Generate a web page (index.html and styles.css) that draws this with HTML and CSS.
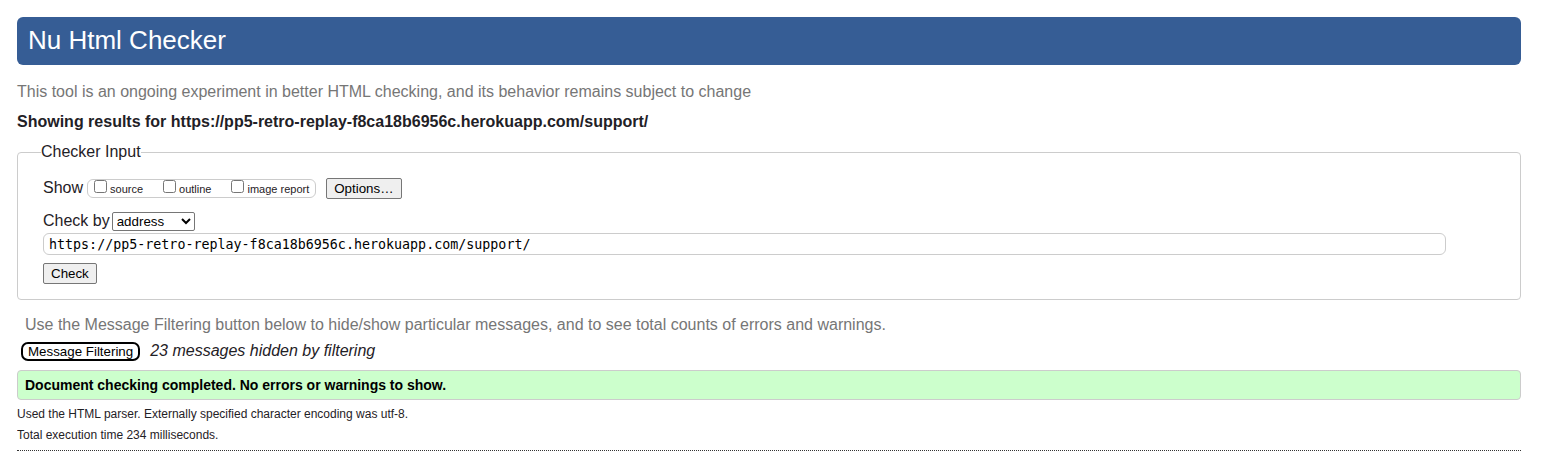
FILE: index.html
```
<!DOCTYPE html>
<html lang="en">
<head>
<meta charset="utf-8">
<title>Nu Html Checker</title>
<link rel="stylesheet" href="styles.css">
</head>
<body>
<h1 class="banner">Nu Html Checker</h1>
<p class="note">This tool is an ongoing experiment in better HTML checking, and its behavior remains subject to change</p>
<h2 class="results-title">Showing results for https://pp5-retro-replay-f8ca18b6956c.herokuapp.com/support/</h2>
<form>
  <fieldset class="checker">
    <legend>Checker Input</legend>
    <div class="show-row">
      <span>Show</span>
      <div class="checks">
        <label><input type="checkbox">source</label>
        <label><input type="checkbox">outline</label>
        <label><input type="checkbox">image report</label>
      </div>
      <button type="button" class="btn options">Options…</button>
    </div>
    <div class="by-row">
      <label for="by">Check by</label>
      <select id="by"><option>address</option><option>file upload</option><option>text input</option></select>
    </div>
    <input class="address" type="url" aria-label="Address" value="https://pp5-retro-replay-f8ca18b6956c.herokuapp.com/support/">
    <button type="button" class="btn">Check</button>
  </fieldset>
</form>
<p class="hint">Use the Message Filtering button below to hide/show particular messages, and to see total counts of errors and warnings.</p>
<div class="filter-row">
  <button type="button" class="filter">Message Filtering</button>
  <em>23 messages hidden by filtering</em>
</div>
<p class="success">Document checking completed. No errors or warnings to show.</p>
<p class="details">Used the HTML parser. Externally specified character encoding was utf-8.</p>
<p class="details">Total execution time 234 milliseconds.</p>
<hr class="rule">
</body>
</html>
```
FILE: styles.css
```
* { box-sizing: border-box; }
body { margin: 17px 22px 0 17px; font: 16px/20px "Liberation Sans", Arial, sans-serif; color: #1f2126; background: #fff; }
h1, h2, p { margin: 0; }
.banner { padding: 7px 11px 9px; border-radius: 6px; background: #365d95; color: #fff; font-size: 26px; font-weight: 400; line-height: 32px; }
.note { margin-top: 17px; color: #767676; }
.results-title { margin-top: 10px; font-size: 16px; line-height: 20px; }
.checker { display: block; min-width: 0; margin: 10px 0 0; padding: 15px 25px; border: 1px solid #ccc; border-radius: 4px; }
.checker legend { margin-left: -2px; padding: 0; }
.show-row, .by-row, .checks, .filter-row { display: flex; align-items: center; }
.show-row { height: 22px; }
.checks { margin-left: 4px; padding: 0 6px; height: 19px; gap: 20px; border: 1px solid #ccc; border-radius: 6px; font-size: 11px; line-height: 17px; }
.checks label { display: flex; align-items: center; padding-top: 2px; }
.checks input { width: 13px; height: 13px; margin: 0 3px 5px 0; }
.btn, .filter, select { font-family: "Liberation Sans", Arial, sans-serif; color: #000; }
.btn { display: block; height: 21px; padding: 0 7px; border: 1px solid #767676; border-radius: 2px; background: #efefef; line-height: 19px; }
.options { margin-left: 10px; }
.by-row { margin-top: 11px; height: 22px; gap: 2px; }
select { width: 83px; height: 19px; padding: 0; border: 1px solid #767676; border-radius: 2px; background: #fff; }
.address { display: block; width: calc(100% - 49px); height: 22px; margin: 1px 0 8px; padding: 0 5px; border: 1px solid #ccc; border-radius: 6px; color: #000; font-family: "DejaVu Sans Mono", monospace; }
.hint { margin: 15px 8px 0; color: #767676; }
.filter-row { margin: 6px 4px 0; gap: 10px; }
.filter { height: 19px; padding: 0 5px; border: 2px solid #000; border-radius: 7px; background: #fff; line-height: 15px; }
.success { margin: 9px 0 4px; padding: 4px 7px; border: 1px solid #ccc; border-radius: 4px; background: #cfc; color: #000; font-size: 14px; font-weight: 700; }
.details { margin-bottom: 1px; font-size: 12px; line-height: 20px; }
.rule { margin: 5px 0 0; border: 0; border-top: 1px dotted #333; }
```
